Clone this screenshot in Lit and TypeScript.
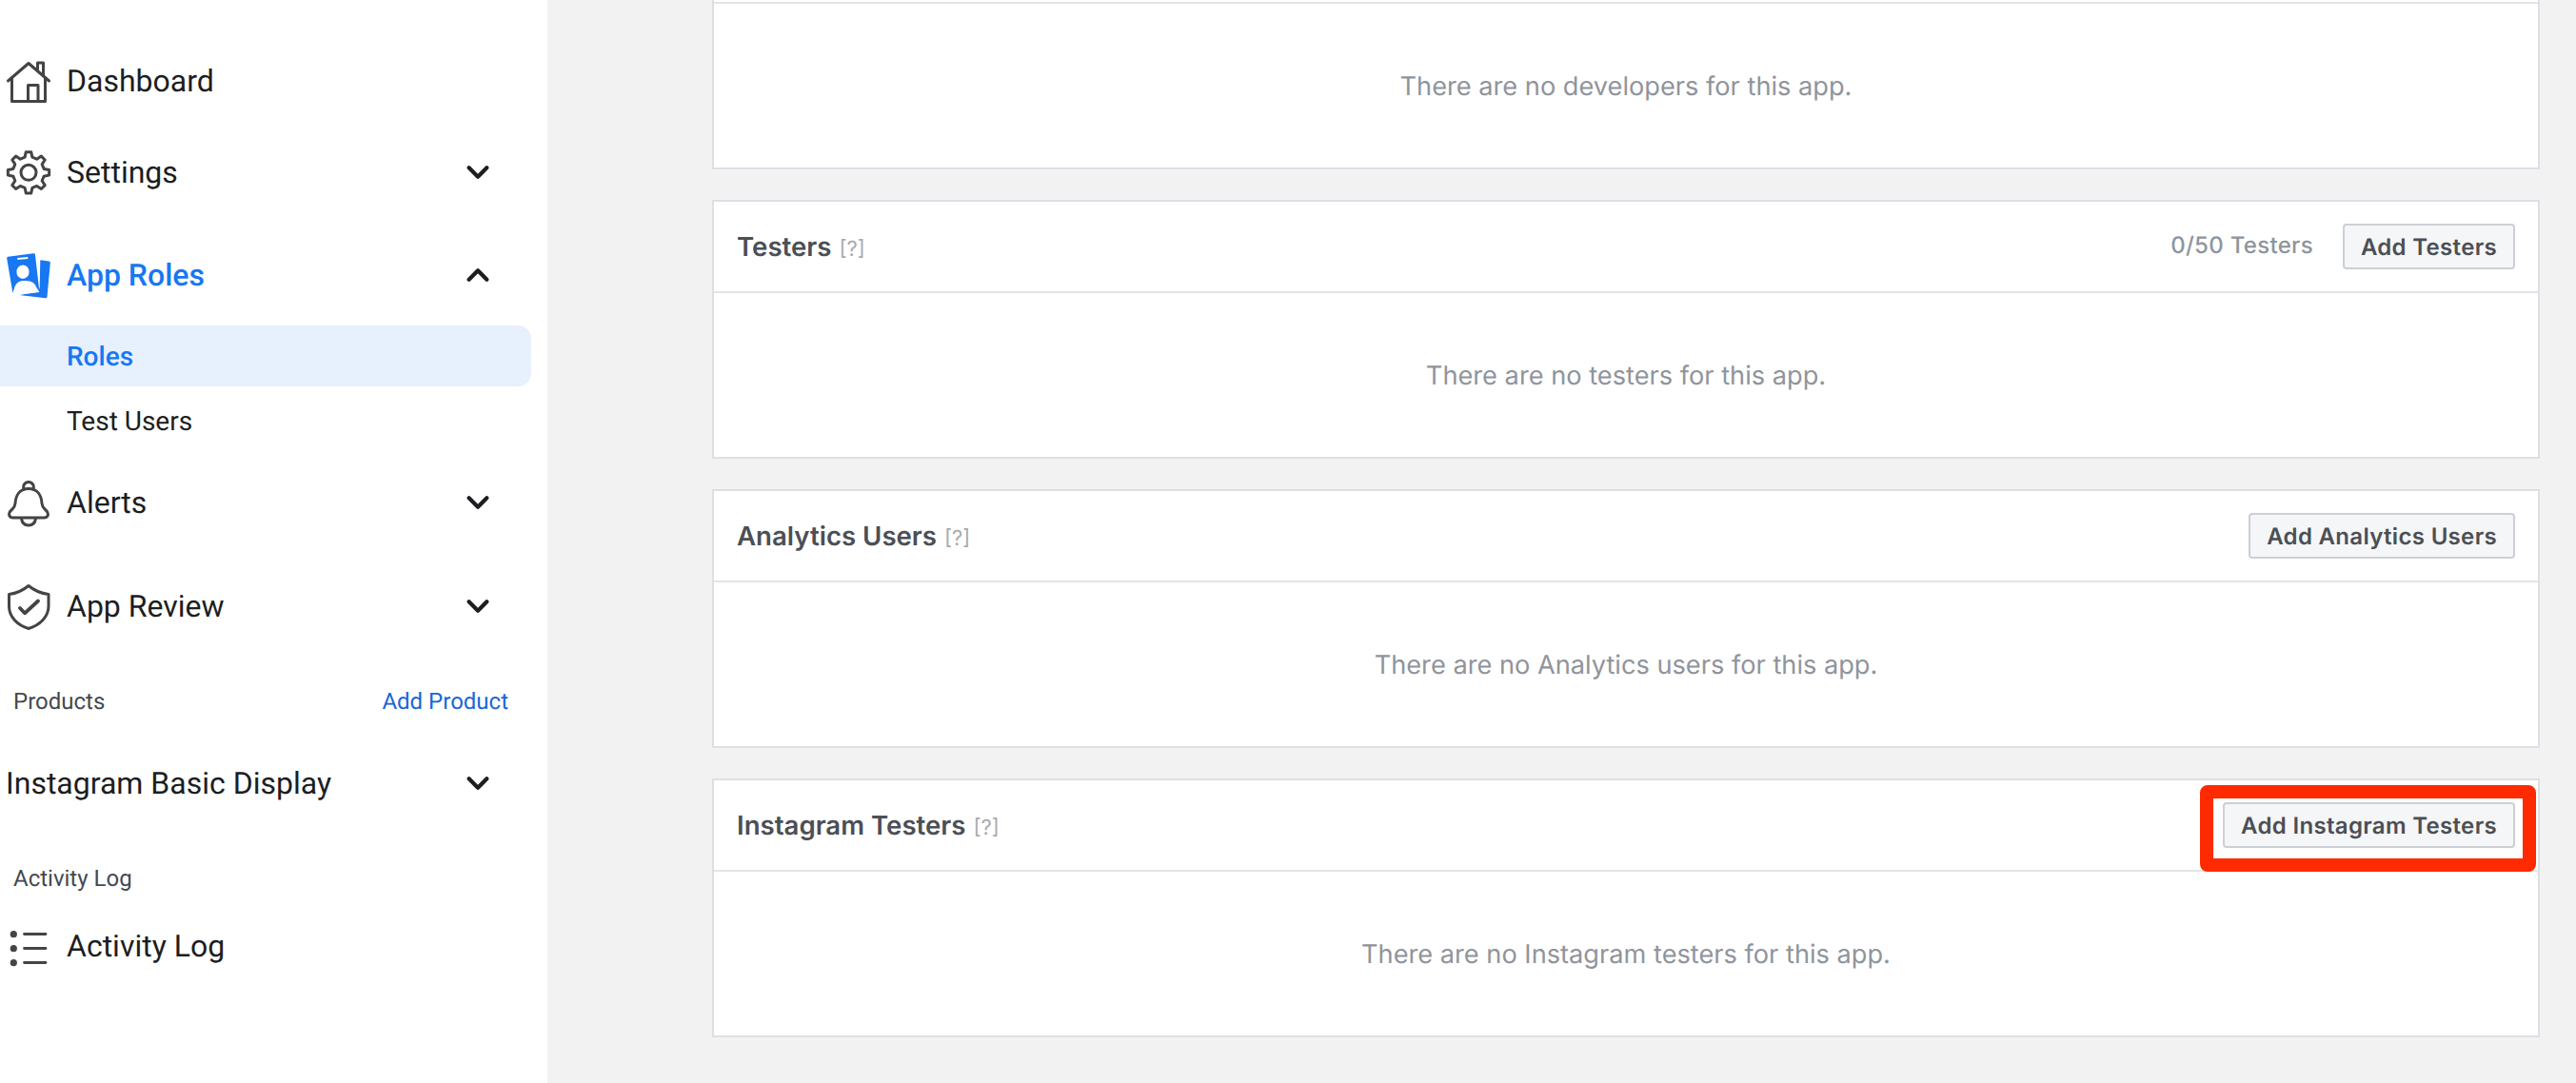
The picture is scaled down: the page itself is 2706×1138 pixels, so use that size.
import { LitElement, html, css, svg } from "lit";
import { customElement } from "lit/decorators.js";

function gearPath(cx: number, cy: number, rOut: number, rIn: number, teeth: number): string {
  const pts: string[] = [];
  const step = (Math.PI * 2) / teeth;
  for (let i = 0; i < teeth; i++) {
    const a = -Math.PI / 2 + i * step;
    const seq: [number, number][] = [
      [rIn, a - step * 0.3],
      [rOut, a - step * 0.16],
      [rOut, a + step * 0.16],
      [rIn, a + step * 0.3],
    ];
    for (const [r, t] of seq) {
      pts.push(`${(cx + r * Math.cos(t)).toFixed(2)} ${(cy + r * Math.sin(t)).toFixed(2)}`);
    }
  }
  return "M" + pts.join("L") + "Z";
}

const icons: Record<string, unknown> = {
  home: svg`<g fill="none" stroke="#444" stroke-width="3" stroke-linejoin="round" stroke-linecap="round">
    <path d="M1.5 23 23 4.5 44.5 23"/><path d="M5.5 20V44.5H40.5V20"/><path d="M22.5 44.5V27.5H33V44.5"/><path d="M32.5 11V4H38.5V17"/></g>`,
  gear: svg`<g fill="none" stroke="#444" stroke-width="3" stroke-linejoin="round">
    <path d=${gearPath(23, 23.3, 21.8, 16.6, 8)}/><circle cx="23" cy="23.3" r="8"/></g>`,
  roles: svg`<path fill="#1877f2" d="M35.3 7.3 44.5 8.6Q46 8.8 45.8 10.3L42.5 46Q42.3 47.5 40.8 47.3L13 44 33 40.7 34.7 35.7Z"/>
    <path fill="#1877f2" d="M1.5 3.8 28 .3Q29.6.1 29.9 1.6L33.8 35 34 40 8 42.3Q6.5 42.4 6.2 40.8L.2 5.4Q0 4 1.5 3.8Z"/>
    <path fill="#fff" d="M11.2 4.9 22.2 3.9 22.4 6 11.4 7Z"/>
    <ellipse cx="17" cy="19.7" rx="6.6" ry="7.3" fill="#fff"/>
    <path fill="#fff" d="M6 43 8 37C9.5 31.5 13 29 18 29 24 29 29.5 30 31 35.5L34.5 41 10 44Z"/>`,
  bell: svg`<g fill="none" stroke="#444" stroke-width="3" stroke-linejoin="round" stroke-linecap="round">
    <path d="M23 8.5C14 8.5 9.5 15 9 24 8.7 29 5 30 3 33.5 1.7 36.5 3.5 39 6.5 39H39.5C42.5 39 44.3 36.5 43 33.5 41 30 37.3 29 37 24 36.5 15 32 8.5 23 8.5Z"/>
    <path d="M18.2 9A5.3 5.3 0 1 1 27.8 9"/><path d="M15.5 39.5C16 44.5 19 47 23 47S30 44.5 30.5 39.5"/></g>`,
  shield: svg`<path d="M23 1.5C29 6.5 36 9.5 44 10.5V23C44 34 35 43 23 46.5 11 43 2.5 34 2.5 23V10.5C10 9.5 17 6.5 23 1.5Z" fill="none" stroke="#444" stroke-width="3" stroke-linejoin="round"/>
    <path d="M14 25 19 30.3 33 17.5" fill="none" stroke="#444" stroke-width="3.8" stroke-linecap="round" stroke-linejoin="round"/>`,
  list: svg`<g fill="#444"><circle cx="7.3" cy="10.7" r="3.6"/><circle cx="7.3" cy="25.7" r="3.6"/><circle cx="7.3" cy="40.7" r="3.6"/></g>
    <g stroke="#444" stroke-width="2.8" stroke-linecap="round"><path d="M18.5 10.5H41M18.5 25.5H41M18.5 40.5H41"/></g>`,
};

const chevDown = html`<svg class="chev" viewBox="0 0 20 12"><path d="M2 2 10 10 18 2" /></svg>`;
const chevUp = html`<svg class="chev" viewBox="0 0 20 12"><path d="M2 10 10 2 18 10" /></svg>`;

const cards = [
  { title: "Testers", count: "0/50 Testers", btn: "Add Testers", empty: "There are no testers for this app." },
  { title: "Analytics Users", count: "", btn: "Add Analytics Users", empty: "There are no Analytics users for this app." },
  { title: "Instagram Testers", count: "", btn: "Add Instagram Testers", empty: "There are no Instagram testers for this app.", mark: true },
];

@customElement("app-root")
export class AppRoot extends LitElement {
  static styles = css`
    :host { display: block; height: 1138px; overflow: hidden; background: #f2f2f2; text-rendering: geometricPrecision; }
    .page { display: flex; height: 1138px; }
    .side {
      width: 575px; flex: none; background: #fff; box-sizing: border-box; padding-top: 53px;
      font-family: Roboto, sans-serif; color: #1c1e21;
    }
    .row { height: 64px; display: flex; align-items: center; padding: 0 61px 0 7px; font-size: 32px; }
    .row.bare { padding-left: 6px; }
    .row .ic { width: 46px; height: 46px; flex: none; margin-right: 17px; display: block; overflow: visible; }
    .row .name { flex: 1; }
    .chev { width: 24px; height: 14px; display: block; fill: none; stroke: #1c1e21; stroke-width: 3.6; stroke-linecap: round; stroke-linejoin: round; }
    .row.active { color: #1877f2; font-weight: 500; }
    .m32 { margin-top: 32px; }
    .m44 { margin-top: 44px; }
    .m22 { margin-top: 22px; }
    .m45 { margin-top: 45px; }
    .m34 { margin-top: 34px; }
    .m48 { margin-top: 48px; }
    .m19 { margin-top: 19px; }
    .sub {
      height: 64px; margin: 0 17px 0 0; display: flex; align-items: center; padding-left: 70px;
      font-size: 28px; border-radius: 0 14px 14px 0;
    }
    .sub.on { margin-top: 21px; background: #e7f0fd; color: #1877f2; font-weight: 500; }
    .sub.next { margin-top: 4px; }
    .label {
      height: 40px; display: flex; align-items: center; justify-content: space-between;
      padding: 0 41px 0 14px; font-size: 24px; color: #444950;
    }
    .label a { color: #1a66d6; }
    .main {
      flex: 1; min-width: 0; box-sizing: border-box; padding: 0 38px 0 173px;
      display: flex; flex-direction: column; gap: 32px;
      font-family: Inter, sans-serif;
    }
    .card { background: #fff; border: 2px solid #dddfe5; }
    .card.clip { border-top: 0; }
    .strip { height: 4px; box-sizing: border-box; border-bottom: 2px solid #e3e4e7; }
    .head {
      height: 96px; box-sizing: border-box; border-bottom: 2px solid #e3e4e7;
      display: flex; align-items: center; padding: 0 24px 0 24px; position: relative;
    }
    .title { font-size: 27.6px; font-weight: 600; color: #4b4f56; }
    .help { font-size: 22px; font-weight: 400; color: #a9abaf; margin-left: 8px; }
    .count { margin-left: auto; margin-right: 31px; font-size: 24px; font-weight: 500; color: #8d949e; letter-spacing: .3px; position: relative; top: -2px; }
    .btn {
      height: 48px; box-sizing: border-box; border: 2px solid #ccd0d5; border-radius: 4px; background: #f5f6f7;
      padding: 0 17px; font: 600 24px Inter, sans-serif; color: #4b4f56; letter-spacing: .32px; display: flex; align-items: center;
    }
    .head > .btn:nth-child(2) { margin-left: auto; }
    .body { height: 172px; display: flex; align-items: center; justify-content: center; font-size: 27.2px; color: #90949c; }
    .mark {
      position: absolute; box-sizing: border-box; right: 2px; top: 5px; width: 353px; height: 91px;
      border: 14px solid #ff2a00; border-radius: 8px; pointer-events: none;
    }
  `;

  private ic(name: string) {
    return html`<svg class="ic" viewBox="0 0 46 46">${icons[name]}</svg>`;
  }

  render() {
    return html`<div class="page">
      <nav class="side">
        <div class="row">${this.ic("home")}<span class="name">Dashboard</span></div>
        <div class="row m32">${this.ic("gear")}<span class="name">Settings</span>${chevDown}</div>
        <div class="row m44 active">${this.ic("roles")}<span class="name">App Roles</span>${chevUp}</div>
        <div class="sub on">Roles</div>
        <div class="sub next">Test Users</div>
        <div class="row m22">${this.ic("bell")}<span class="name">Alerts</span>${chevDown}</div>
        <div class="row m45">${this.ic("shield")}<span class="name">App Review</span>${chevDown}</div>
        <div class="label m48"><span>Products</span><a>Add Product</a></div>
        <div class="row bare m34"><span class="name">Instagram Basic Display</span>${chevDown}</div>
        <div class="label m48"><span>Activity Log</span></div>
        <div class="row m19">${this.ic("list")}<span class="name">Activity Log</span></div>
      </nav>
      <main class="main">
        <section class="card clip"><div class="strip"></div><div class="body">There are no developers for this app.</div></section>
        ${cards.map(
          (c) => html`<section class="card">
            <div class="head">
              <span class="title">${c.title}<span class="help">[?]</span></span>
              ${c.count ? html`<span class="count">${c.count}</span>` : ""}
              <span class="btn">${c.btn}</span>
              ${c.mark ? html`<div class="mark"></div>` : ""}
            </div>
            <div class="body">${c.empty}</div>
          </section>`
        )}
      </main>
    </div>`;
  }
}
